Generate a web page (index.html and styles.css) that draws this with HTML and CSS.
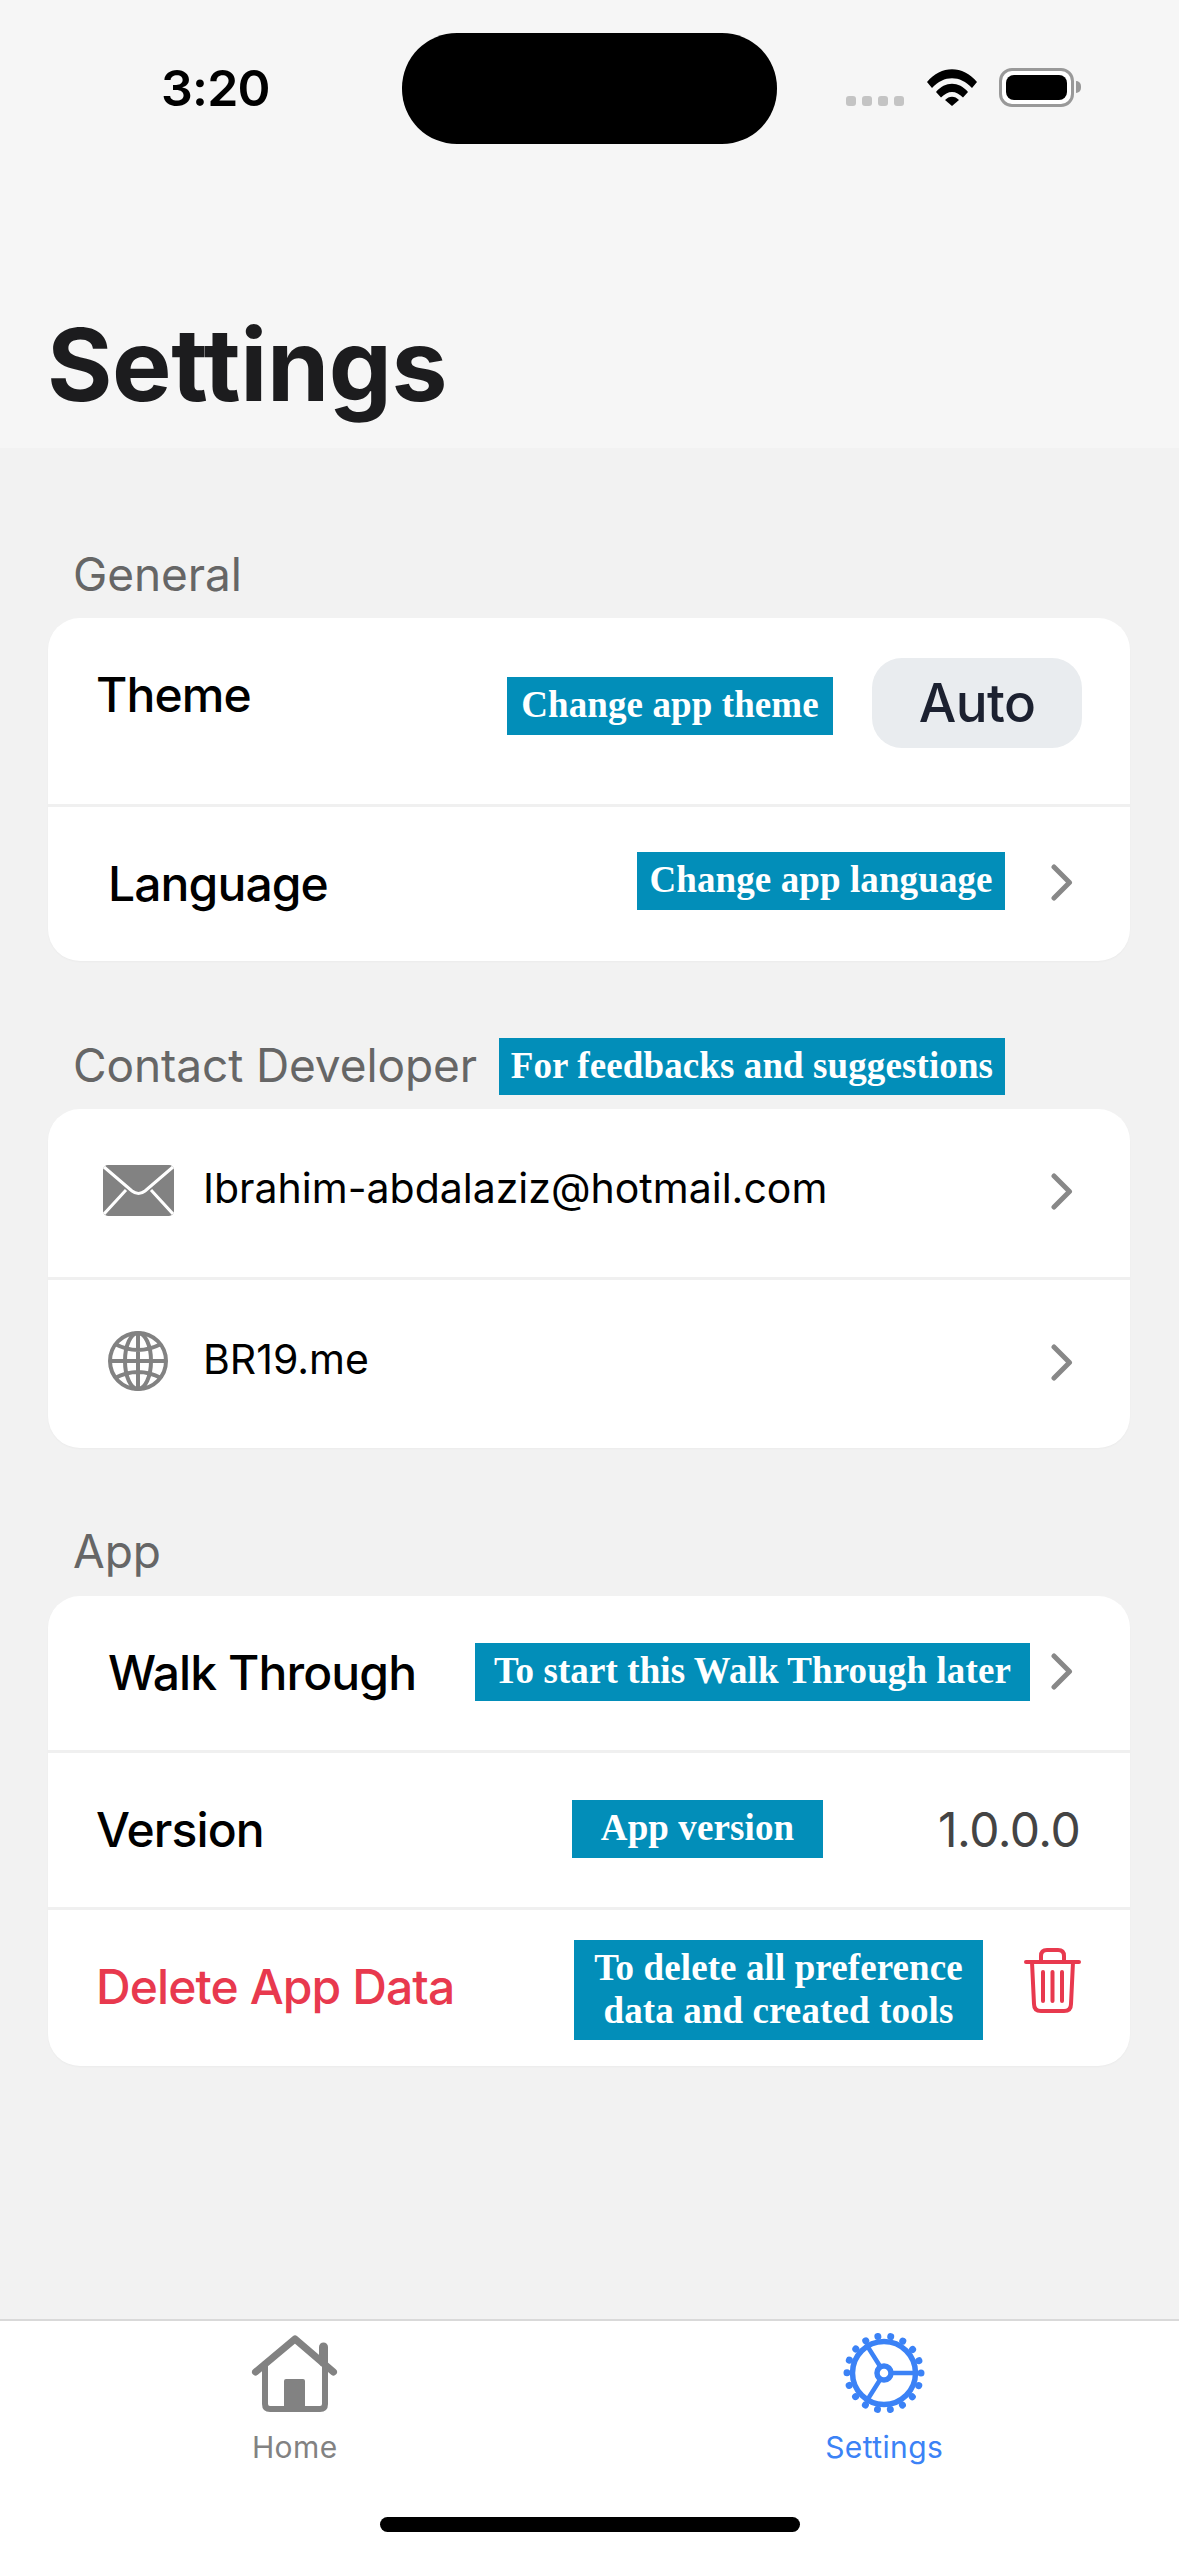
FILE: index.html
```html
<!doctype html>
<html>
	<head>
		<meta charset="utf-8">
		<title>Settings</title>
		<link rel="stylesheet" href="styles.css">
	</head>
	<body>
		<!-- Status bar and big title -->
		<header class="header">
			<div class="statusbar">
				<span class="time">3:20</span>
				<div class="island"></div>
				<div class="status-icons">
					<div class="signal"><i></i><i></i><i></i><i></i></div>
					<svg class="wifi" width="50" height="38" viewBox="0 0 50 38">
						<path d="M0 14 C14 -3 36 -3 50 14 L45 20 C33 7 17 7 5 20 Z" fill="#000"/>
						<path d="M9 24 C18 13 32 13 41 24 L36 29.500 C29 22 21 22 14 29.500 Z" fill="#000"/>
						<path d="M18 32 C22 27.500 28 27.500 32 32 L25 38 Z" fill="#000"/>
					</svg>
					<div class="battery"><div class="battery-level"></div></div>
					<div class="battery-nub"></div>
				</div>
			</div>
			<h1 class="title">Settings</h1>
		</header>

		<main class="main">
			<!-- General -->
			<section class="section section-general">
				<div class="section-head"><h2>General</h2></div>
				<div class="card">
					<div class="row row-theme">
						<span class="label">Theme</span>
						<span class="chip chip-theme">Change app theme</span>
						<span class="auto">Auto</span>
					</div>
					<div class="row row-language">
						<span class="label label-inset">Language</span>
						<span class="chip chip-language">Change app language</span>
						<svg class="chevron" width="22" height="37" viewBox="0 0 22 37"><path d="M3 3 L18.500 18.500 L3 34"/></svg>
					</div>
				</div>
			</section>

			<!-- Contact Developer -->
			<section class="section section-contact">
				<div class="section-head">
					<h2>Contact Developer</h2>
					<span class="chip chip-feedback">For feedbacks and suggestions</span>
				</div>
				<div class="card">
					<div class="row row-contact">
						<svg class="icon-mail" width="71" height="51" viewBox="0 0 71 51">
							<rect width="71" height="51" rx="5" fill="#828282"/>
							<path d="M1 2 L29 26 Q35.500 31 42 26 L70 2 M1 49 L23 25 M70 49 L48 25" fill="none" stroke="#fff" stroke-width="3"/>
						</svg>
						<span class="contact-text">Ibrahim-abdalaziz@hotmail.com</span>
						<svg class="chevron" width="22" height="37" viewBox="0 0 22 37"><path d="M3 3 L18.500 18.500 L3 34"/></svg>
					</div>
					<div class="row row-contact">
						<svg class="icon-globe" width="60" height="60" viewBox="0 0 60 60" fill="none" stroke="#828282" stroke-width="4">
							<circle cx="30" cy="30" r="28"/>
							<ellipse cx="30" cy="30" rx="13" ry="28"/>
							<path d="M30 2 V58 M2 30 H58 M7 13 Q30 25 53 13 M7 47 Q30 35 53 47"/>
						</svg>
						<span class="contact-text contact-site">BR19.me</span>
						<svg class="chevron" width="22" height="37" viewBox="0 0 22 37"><path d="M3 3 L18.500 18.500 L3 34"/></svg>
					</div>
				</div>
			</section>

			<!-- App -->
			<section class="section section-app">
				<div class="section-head"><h2>App</h2></div>
				<div class="card">
					<div class="row row-walk">
						<span class="label label-inset">Walk Through</span>
						<span class="chip chip-walk">To start this Walk Through later</span>
						<svg class="chevron" width="22" height="37" viewBox="0 0 22 37"><path d="M3 3 L18.500 18.500 L3 34"/></svg>
					</div>
					<div class="row row-version">
						<span class="label">Version</span>
						<span class="chip chip-version">App version</span>
						<span class="version-number">1.0.0.0</span>
					</div>
					<div class="row row-delete">
						<span class="label label-danger">Delete App Data</span>
						<span class="chip chip-delete">To delete all preference<br>data and created tools</span>
						<svg class="icon-trash" width="57" height="65" viewBox="0 0 57 65" fill="none" stroke="#e8394e" stroke-width="4" stroke-linecap="round">
							<path d="M2 14 H55"/>
							<path d="M17 14 V8 Q17 2 23 2 H34 Q40 2 40 8 V14"/>
							<path d="M8 14 L10 56 Q10 63 17 63 H40 Q47 63 47 56 L49 14"/>
							<path d="M19 24 V53 M28.500 24 V53 M38 24 V53"/>
						</svg>
					</div>
				</div>
			</section>
		</main>

		<!-- Bottom tabs -->
		<footer class="tabbar">
			<div class="tabs">
				<div class="tab">
					<svg width="90" height="90" viewBox="0 0 90 90" fill="none" stroke="#828282" stroke-width="7" stroke-linecap="round" stroke-linejoin="round">
						<path d="M5.500 44 L45 11 L83.500 44"/>
						<path d="M15 36 V76 Q15 81 20 81 H70 Q75 81 75 76 V36" stroke-width="6"/>
						<rect x="36" y="53" width="17" height="26" fill="#828282" stroke-width="4"/>
						<path d="M73.500 19 V34" stroke-width="9"/>
					</svg>
					<span class="tab-label">Home</span>
				</div>
				<div class="tab tab-active">
					<svg width="90" height="90" viewBox="0 0 90 90" fill="none" stroke="#3b82f6">
						<circle cx="45" cy="45" r="37" stroke-width="7" stroke-linecap="round" stroke-dasharray="0.010 12.906"/>
						<circle cx="45" cy="45" r="31.500" stroke-width="5.500"/>
						<circle cx="45" cy="45" r="7" stroke-width="5.500"/>
						<path d="M52 45 H76 M41.500 39 L27 16 M41.500 51 L27 74" stroke-width="4.500"/>
					</svg>
					<span class="tab-label">Settings</span>
				</div>
			</div>
			<div class="home-bar"></div>
		</footer>
	</body>
</html>
```

FILE: styles.css
```css
/* General */
* {
	margin: 0;
	padding: 0;
	box-sizing: border-box;
}
html, body {
	height: 100%;
}
body {
	display: flex;
	flex-direction: column;
	background: #f2f2f2;
	font-family: Inter, "Liberation Sans", sans-serif;
	color: #000;
}

/* Header */
.header {
	height: 448px;
	background: #f6f6f6;
}
.statusbar {
	display: flex;
	align-items: flex-start;
	height: 144px;
	padding-top: 33px;
}
.time {
	width: 240px;
	margin: 25px 0 0 161px;
	font-size: 50px;
	line-height: 60px;
	font-weight: 600;
	letter-spacing: -0.8px;
}
.island {
	width: 375px;
	height: 111px;
	margin-left: 1px;
	border-radius: 55px;
	background: #000;
}
.status-icons {
	display: flex;
	align-items: flex-start;
	margin: 35px 0 0 69px;
}
.signal {
	display: flex;
	gap: 6px;
	margin: 28px 23px 0 0;
}
.signal i {
	width: 10px;
	height: 10px;
	border-radius: 3px;
	background: #c4c4c4;
}
.battery {
	width: 75px;
	height: 39px;
	margin-left: 22px;
	padding: 4px;
	border: 3px solid #999;
	border-radius: 13px;
	background: #fff;
}
.battery-level {
	height: 100%;
	border-radius: 8px;
	background: #000;
}
.battery-nub {
	width: 5px;
	height: 12px;
	margin: 13px 0 0 2px;
	border-radius: 0 6px 6px 0;
	background: #999;
}
.title {
	margin: 161px 0 0 47px;
	font-size: 100px;
	line-height: 120px;
	font-weight: 700;
	letter-spacing: -0.4px;
	color: #1c1c1e;
}

/* Sections */
.main {
	flex: 1;
	padding: 0 49px 0 48px;
}
.section-general {
	padding-top: 98px;
}
.section-contact {
	margin-top: 76px;
}
.section-app {
	margin-top: 75px;
}
.section-head {
	display: flex;
	align-items: flex-start;
	height: 72px;
	padding-left: 25px;
}
.section-app .section-head {
	height: 73px;
}
.section-head h2 {
	font-size: 46px;
	line-height: 56px;
	font-weight: 400;
	letter-spacing: -0.1px;
	color: #666;
}
.card {
	overflow: hidden;
	border-radius: 32px;
	background: #fff;
	box-shadow: 0 1px 2px rgba(0,0,0,0.03);
}

/* Rows */
.row {
	display: flex;
	align-items: flex-start;
	padding: 0 48px;
	border-top: 3px solid #f0f0f0;
}
.row:first-child {
	border-top: 0;
}
.row-theme { height: 186px; }
.row-language { height: 157px; }
.row-contact { height: 171px; }
.row-contact:first-child { height: 168px; }
.row-walk { height: 154px; }
.row-version { height: 157px; }
.row-delete { height: 159px; }

.label {
	margin-top: 47px;
	font-size: 48px;
	line-height: 60px;
	font-weight: 500;
	letter-spacing: -0.9px;
}
.label-inset { margin-left: 12px; }
.label-danger { color: #e8394e; }

.auto {
	width: 210px;
	height: 90px;
	margin: 40px 0 0 39px;
	border-radius: 30px;
	background: #e9ecef;
	color: #1c2130;
	font-size: 53px;
	line-height: 90px;
	font-weight: 500;
	letter-spacing: -0.6px;
	text-align: center;
}
.version-number {
	width: 141px;
	margin: 47px 3px 0 115px;
	font-size: 48px;
	line-height: 60px;
	letter-spacing: -0.5px;
	color: #444;
	text-align: right;
}
.contact-text {
	margin: 54px auto 0 29px;
	font-size: 41px;
	line-height: 50px;
}
.contact-site {
	margin-left: 35px;
}

/* Blue notes added over the screenshot */
.chip {
	flex: none;
	background: #028eb9;
	color: #fff;
	font-family: "Liberation Serif", serif;
	font-weight: 700;
	font-size: 37px;
	letter-spacing: 0.1px;
	text-align: center;
	white-space: nowrap;
}
.chip-theme {
	width: 326px;
	height: 58px;
	margin: 59px 0 0 auto;
	line-height: 55px;
}
.chip-language {
	width: 368px;
	height: 58px;
	margin: 45px 0 0 auto;
	line-height: 55px;
}
.chip-feedback {
	width: 506px;
	height: 57px;
	margin: 1px 0 0 22px;
	line-height: 55px;
}
.chip-walk {
	width: 555px;
	height: 58px;
	margin: 47px 0 0 auto;
	line-height: 55px;
}
.chip-version {
	width: 251px;
	height: 58px;
	margin: 47px 0 0 auto;
	line-height: 55px;
}
.chip-delete {
	width: 409px;
	height: 100px;
	margin: 30px 0 0 auto;
	line-height: 43px;
	padding-top: 6px;
}

/* Icons */
.chevron {
	flex: none;
	margin: 64px 9px 0 0;
	fill: none;
	stroke: #888;
	stroke-width: 5;
	stroke-linecap: round;
	stroke-linejoin: round;
}
.row-language .chevron {
	margin: 57px 9px 0 46px;
}
.row-walk .chevron {
	margin: 57px 9px 0 21px;
}
.icon-mail {
	flex: none;
	margin: 56px 0 0 7px;
}
.icon-globe {
	flex: none;
	margin: 51px 0 0 12px;
}
.icon-trash {
	flex: none;
	margin: 38px 1px 0 41px;
}

/* Tab bar */
.tabbar {
	height: 237px;
	border-top: 2px solid #d9d9d9;
	background: #fff;
}
.tabs {
	display: grid;
	grid-template-columns: 1fr 1fr;
	height: 196px;
	padding-top: 7px;
}
.tab {
	display: flex;
	flex-direction: column;
	align-items: center;
}
.tab-label {
	margin-top: 11px;
	font-size: 30px;
	line-height: 36px;
	letter-spacing: 0.4px;
	color: #828282;
}
.tab-active .tab-label {
	color: #3b82f6;
}
.home-bar {
	width: 420px;
	height: 15px;
	margin: 0 auto;
	border-radius: 8px;
	background: #000;
}
```
